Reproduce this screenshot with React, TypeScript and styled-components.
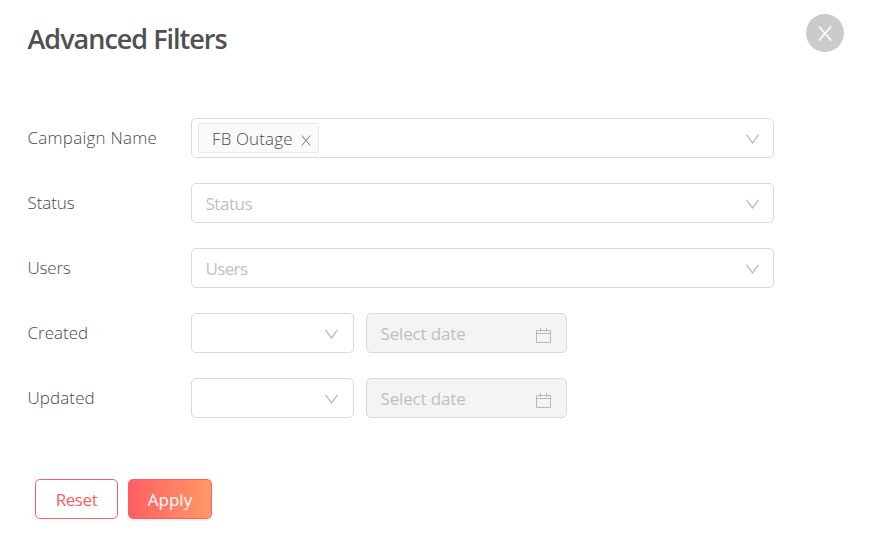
import React from "react";
import styled, { createGlobalStyle } from "styled-components";

const GlobalStyle = createGlobalStyle`
  * { box-sizing: border-box; }
  body { margin: 0; background: #fff; font-family: "Open Sans", "Noto Sans", sans-serif; }
`;

const Dialog = styled.main`
  width: 872px;
  height: 537px;
  padding: 14px 28px 0 27px;
  background: #fff;
  font-size: 17px;
  overflow: hidden;
`;

const Header = styled.header`
  display: flex;
  justify-content: space-between;
  align-items: flex-start;
  height: 104px;
`;

const Title = styled.h1`
  margin: 7px 0 0 0.5px;
  font-size: 27px;
  line-height: 36px;
  font-weight: 600;
  letter-spacing: -1px;
  color: #505050;
`;

const CloseButton = styled.button`
  display: flex;
  align-items: center;
  justify-content: center;
  width: 38px;
  height: 38px;
  padding: 0;
  border: 0;
  border-radius: 50%;
  background: #cbcbcb;
`;

const Rows = styled.div`
  display: grid;
  gap: 25px;
`;

const Row = styled.div`
  display: flex;
  height: 40px;
`;

const Text = styled.span<{ $spacing?: number }>`
  letter-spacing: ${(p) => p.$spacing ?? 0}px;
  white-space: nowrap;
`;

const Label = styled.label`
  width: 164px;
  padding-left: 0.5px;
  line-height: 40px;
  font-weight: 300;
  color: #4a4a4a;
`;

const Field = styled.div<{ $width: number; $disabled?: boolean; $tagged?: boolean; $compact?: boolean }>`
  display: flex;
  align-items: center;
  justify-content: space-between;
  width: ${(p) => p.$width}px;
  height: 40px;
  margin-right: 12px;
  padding: ${(p) => (p.$tagged ? "0 14px 0 6px" : p.$compact ? "2px 15px 0 14px" : "2px 14px 0 13.5px")};
  border: 1px solid #d9d9d9;
  border-radius: 5px;
  background: ${(p) => (p.$disabled ? "#f4f4f4" : "#fff")};
  color: #bfbfbf;
  line-height: 36px;
`;

const Tag = styled.span`
  display: flex;
  align-items: center;
  justify-content: space-between;
  width: 121px;
  height: 30px;
  padding: 1px 8px 0 13px;
  border: 1px solid #e8e8e8;
  border-radius: 2px;
  background: #fafafa;
  color: #4a4a4a;
  font-weight: 300;
  line-height: 28px;
`;

const Actions = styled.footer`
  display: flex;
  gap: 10px;
  margin: 61px 0 0 8px;
`;

const Button = styled.button<{ $primary?: boolean }>`
  width: ${(p) => (p.$primary ? 84 : 83)}px;
  height: 40px;
  padding: 1px 0 0;
  border: 1px solid #ff5d64;
  border-radius: 5px;
  background: ${(p) => (p.$primary ? "linear-gradient(90deg, #ff5e62, #ff9966) border-box" : "#fff")};
  box-shadow: ${(p) => (p.$primary ? "0 2px 0 rgba(0, 0, 0, 0.045)" : "none")};
  color: ${(p) => (p.$primary ? "#fff" : "#ff5e62")};
  font: 400 17px/36px "Open Sans", sans-serif;
`;

const Cross = ({ width, height, stroke, weight }: { width: number; height: number; stroke: string; weight: number }) => (
  <svg width={width} height={height} viewBox={`0 0 ${width} ${height}`} fill="none" stroke={stroke} strokeWidth={weight}>
    <path d={`M.8.5 ${width - 0.8} ${height - 0.5}M${width - 0.8}.5.8 ${height - 0.5}`} />
  </svg>
);

const RemoveMark = styled.span`
  display: flex;
  padding-top: 3px;
  margin-right: -0.5px;
`;

const ChevronSvg = styled.svg<{ $lowered?: boolean }>`
  margin-top: ${(p) => (p.$lowered ? 2 : 0)}px;
`;

const Chevron = ({ lowered }: { lowered?: boolean }) => (
  <ChevronSvg $lowered={lowered} width="13" height="10" viewBox="0 0 13 10" fill="none" stroke="#b8b8b8" strokeWidth="1.3">
    <path d="M.5.8 6.5 8.8 12.5.8" />
  </ChevronSvg>
);

const CalendarSvg = styled.svg`
  margin-top: 2px;
`;

const CalendarIcon = () => (
  <CalendarSvg width="17" height="17" viewBox="0 0 17 17" fill="none" stroke="#b8b8b8">
    <path d="M1.5 3.5h14v12h-14zM1.5 6.5h14M5.5 1v4M11.5 1v4" />
  </CalendarSvg>
);

const selectRows = [
  { name: "Status", spacing: -0.1, hint: -0.45 },
  { name: "Users", spacing: -0.2, hint: -0.65 },
];

const dateRows = [
  { name: "Created", spacing: 0 },
  { name: "Updated", spacing: 0.1 },
];

export default function App() {
  return (
    <Dialog>
      <GlobalStyle />
      <Header>
        <Title>Advanced Filters</Title>
        <CloseButton aria-label="Close">
          <Cross width={14} height={15} stroke="#fff" weight={1.6} />
        </CloseButton>
      </Header>
      <Rows>
        <Row>
          <Label><Text $spacing={0.24}>Campaign Name</Text></Label>
          <Field $width={583} $tagged>
            <Tag>
              <Text $spacing={0.12}>FB Outage</Text>
              <RemoveMark><Cross width={10} height={11} stroke="#777" weight={1} /></RemoveMark>
            </Tag>
            <Chevron lowered />
          </Field>
        </Row>
        {selectRows.map((row) => (
          <Row key={row.name}>
            <Label><Text $spacing={row.spacing}>{row.name}</Text></Label>
            <Field $width={583}>
              <Text $spacing={row.hint}>{row.name}</Text>
              <Chevron />
            </Field>
          </Row>
        ))}
        {dateRows.map((row) => (
          <Row key={row.name}>
            <Label><Text $spacing={row.spacing}>{row.name}</Text></Label>
            <Field $width={163} $compact>
              <span />
              <Chevron />
            </Field>
            <Field $width={201} $disabled>
              <Text $spacing={-0.15}>Select date</Text>
              <CalendarIcon />
            </Field>
          </Row>
        ))}
      </Rows>
      <Actions>
        <Button><Text $spacing={-0.4}>Reset</Text></Button>
        <Button $primary><Text>Apply</Text></Button>
      </Actions>
    </Dialog>
  );
}
